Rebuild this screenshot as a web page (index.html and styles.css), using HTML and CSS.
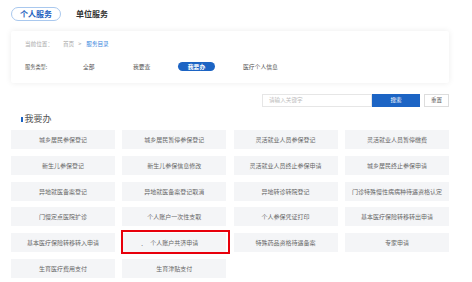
FILE: index.html
```html
<!DOCTYPE html>
<html lang="zh">
<head>
<meta charset="utf-8">
<link rel="stylesheet" href="styles.css">
</head>
<body>
<div class="tabs">
  <span class="tab active">个人服务</span>
  <span class="tab">单位服务</span>
</div>
<div class="panel">
  <div class="crumb">
    <span class="label">当前位置：</span>
    <span>首页</span><span class="sep">&gt;</span><span class="cur">服务目录</span>
  </div>
  <div class="types">
    <span class="label">服务类型:</span>
    <span class="type t1">全部</span>
    <span class="type t2">我要查</span>
    <span class="type on">我要办</span>
    <span class="type t4">医疗个人信息</span>
  </div>
</div>
<div class="search">
  <div class="input">请输入关键字</div>
  <div class="btn">搜索</div>
  <div class="reset">重置</div>
</div>
<div class="heading"><span class="bar"></span>我要办</div>
<div class="grid">
  <div class="tile">城乡居民参保登记</div>
  <div class="tile">城乡居民暂停参保登记</div>
  <div class="tile">灵活就业人员参保登记</div>
  <div class="tile">灵活就业人员暂停缴费</div>
  <div class="tile">新生儿参保登记</div>
  <div class="tile">新生儿参保信息修改</div>
  <div class="tile">灵活就业人员终止参保申请</div>
  <div class="tile">城乡居民终止参保申请</div>
  <div class="tile">异地就医备案登记</div>
  <div class="tile">异地就医备案登记取消</div>
  <div class="tile">异地转诊转院登记</div>
  <div class="tile">门诊特殊慢性病病种待遇资格认定</div>
  <div class="tile">门慢定点医院扩诊</div>
  <div class="tile">个人账户一次性支取</div>
  <div class="tile">个人参保凭证打印</div>
  <div class="tile">基本医疗保险转移转出申请</div>
  <div class="tile">基本医疗保险转移转入申请</div>
  <div class="tile marked"><span class="dot">.</span>个人账户共济申请<span class="mark"></span></div>
  <div class="tile">特殊药品资格待遇备案</div>
  <div class="tile">专家申请</div>
  <div class="tile">生育医疗费用支付</div>
  <div class="tile">生育津贴支付</div>
</div>
</body>
</html>
```
FILE: styles.css
```css
* { box-sizing: border-box; }
body {
  margin: 0;
  background: #fff;
  font-family: "Noto Sans CJK SC", "Noto Sans", sans-serif;
  color: #666;
}
.tabs {
  display: flex;
  align-items: center;
  gap: 15px;
  padding: 7px 0 0 11px;
  height: 21px;
}
.tab {
  font-size: 8px;
  font-weight: bold;
  color: #333;
  line-height: 12px;
}
.tab.active {
  width: 50px;
  height: 14px;
  border: 1px solid #a9c8ee;
  border-radius: 8px;
  color: #1f63c0;
  text-align: center;
}
.panel {
  margin: 10px 23px 0 11px;
  height: 52px;
  background: #fff;
  box-shadow: 0 0 6px rgba(0,0,0,0.08);
  border-radius: 2px;
  padding: 9px 0 0 14px;
  font-size: 5.6px;
}
.crumb {
  display: flex;
  align-items: center;
  height: 8px;
  color: #aaa;
}
.crumb .label { width: 38px; }
.crumb .sep { margin: 0 5px 0 4px; }
.crumb .cur { color: #3a86dd; }
.types {
  display: flex;
  align-items: center;
  height: 10px;
  margin-top: 13px;
  color: #555;
  font-size: 5.8px;
}
.types .label { width: 58px; font-size: 5.2px; }
.type.t1 { width: 50px; }
.type.t2 { width: 45px; }
.type.on {
  width: 37px;
  height: 9px;
  line-height: 9px;
  text-align: center;
  background: #1c64c4;
  color: #fff;
  border-radius: 5px;
  font-weight: bold;
  margin-right: 28px;
}
.search {
  display: flex;
  justify-content: flex-end;
  align-items: center;
  gap: 4px;
  margin: 10px 23px 0 0;
  height: 14px;
  font-size: 5.6px;
}
.input {
  width: 110px;
  height: 13px;
  line-height: 11px;
  border: 1px solid #e6e6e6;
  color: #bbb;
  padding-left: 6px;
  margin-right: -4px;
}
.btn {
  width: 48px;
  height: 13px;
  line-height: 13px;
  background: #1c64c4;
  color: #fff;
  text-align: center;
}
.reset {
  width: 25px;
  height: 13px;
  line-height: 11px;
  border: 1px solid #ddd;
  color: #555;
  text-align: center;
}
.heading {
  display: flex;
  align-items: center;
  gap: 2px;
  margin: 7px 0 0 21px;
  height: 10px;
  font-size: 9px;
  color: #555;
  line-height: 10px;
}
.bar {
  width: 1.5px;
  height: 5px;
  background: #1c64c4;
}
.grid {
  display: grid;
  grid-template-columns: repeat(4, 104px);
  grid-auto-rows: 19px;
  column-gap: 7.3px;
  row-gap: 6.8px;
  margin: 6px 0 0 11px;
}
.tile {
  position: relative;
  background: #f4f5f7;
  font-size: 6px;
  color: #666;
  display: flex;
  align-items: center;
  justify-content: center;
}
.dot {
  position: absolute;
  left: 19px;
  top: 6px;
  color: #333;
}
.mark {
  position: absolute;
  left: -1px;
  top: -3px;
  right: -4px;
  bottom: -1.5px;
  border: 2.5px solid #e8000b;
}
```
